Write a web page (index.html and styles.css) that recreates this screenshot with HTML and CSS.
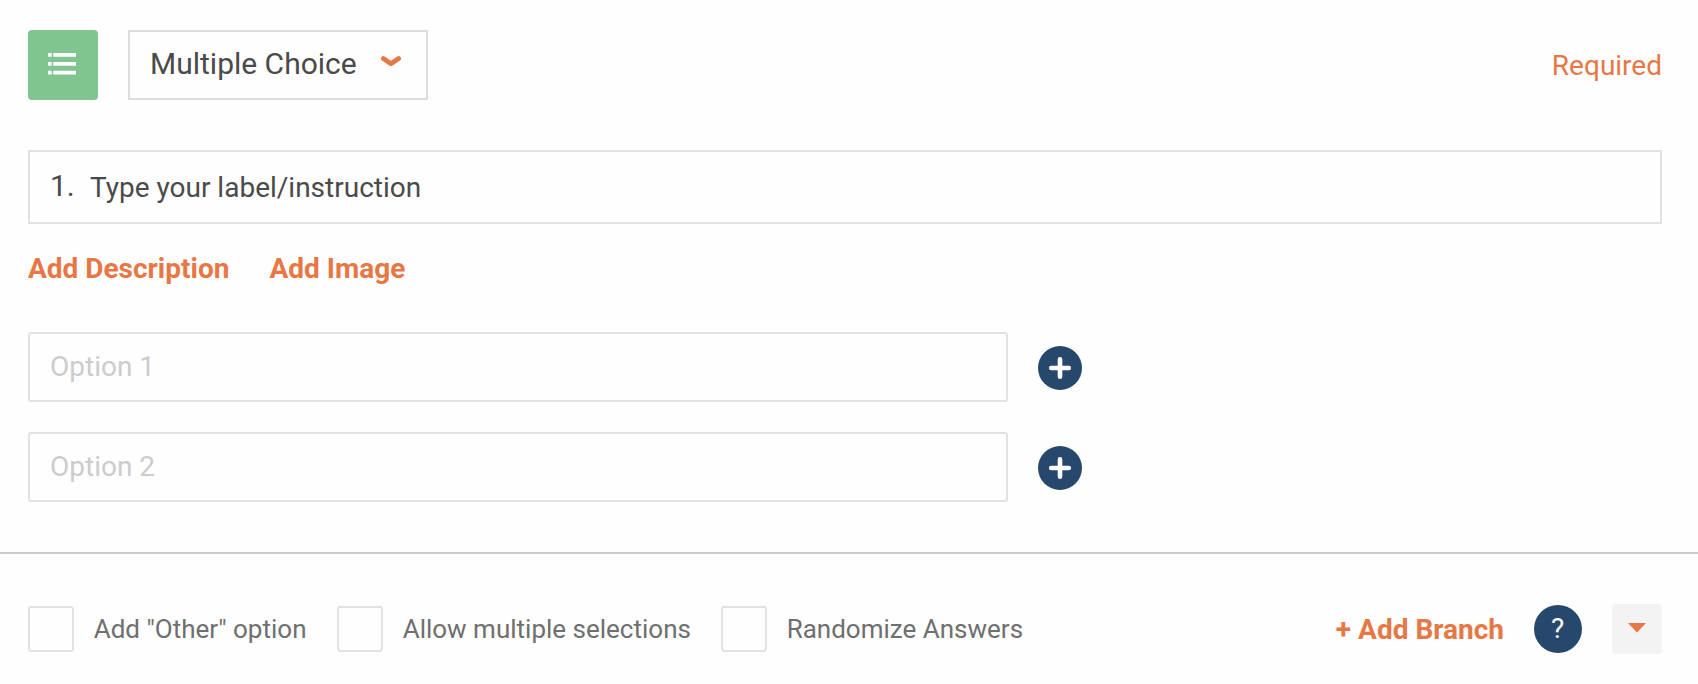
FILE: index.html
```html
<!DOCTYPE html>
<html lang="en">
<head>
<meta charset="utf-8">
<title>Question editor</title>
<link rel="stylesheet" href="styles.css">
</head>
<body>
<main class="editor">
  <section class="question">
    <header class="question-header">
      <div class="type-icon">
        <svg width="28" height="22" viewBox="0 0 28 22" fill="#fff"><path d="M0 0h3.700v3.800H0zM5.200 0H28v3.800H5.200zM0 8.900h3.700v3.800H0zM5.200 8.900H28v3.800H5.200zM0 17.700h3.700v3.800H0zM5.200 17.700H28v3.800H5.200z"/></svg>
      </div>
      <button class="type-select">
        <span class="type-name">Multiple Choice</span>
        <svg class="chevron" width="20" height="12" viewBox="0 0 20 12"><path d="M2.400 2.500L10 7.800L17.600 2.500" fill="none" stroke="#e77845" stroke-width="4.700" stroke-linecap="round" stroke-linejoin="round"/></svg>
      </button>
      <span class="required">Required</span>
    </header>
    <div class="label-box"><span class="number">1.</span><span class="label-text">Type your label/instruction</span></div>
    <nav class="links"><a class="link add-description">Add Description</a><a class="link add-image">Add Image</a></nav>
    <div class="options">
      <div class="option-row">
        <div class="option-input">Option 1</div>
        <svg class="plus" width="44" height="44" viewBox="0 0 44 44"><circle cx="22" cy="22" r="22" fill="#26486c"/><path d="M22 13.200v17.600M13.200 22h17.600" stroke="#fff" stroke-width="4.600" stroke-linecap="round"/></svg>
      </div>
      <div class="option-row">
        <div class="option-input">Option 2</div>
        <svg class="plus" width="44" height="44" viewBox="0 0 44 44"><circle cx="22" cy="22" r="22" fill="#26486c"/><path d="M22 13.200v17.600M13.200 22h17.600" stroke="#fff" stroke-width="4.600" stroke-linecap="round"/></svg>
      </div>
    </div>
  </section>
  <footer class="settings">
    <div class="check other"><span class="box"></span><span class="check-text">Add "Other" option</span></div>
    <div class="check multiple"><span class="box"></span><span class="check-text">Allow multiple selections</span></div>
    <div class="check"><span class="box"></span><span class="check-text">Randomize Answers</span></div>
    <a class="link branch">+ Add Branch</a>
    <span class="help">?</span>
    <button class="menu"><svg width="18" height="10" viewBox="0 0 18 10"><path d="M0 0h18L9 9.500z" fill="#e77845"/></svg></button>
  </footer>
</main>
</body>
</html>
```
FILE: styles.css
```css
* { box-sizing: border-box; }
body {
  margin: 0;
  background: #fefefe;
  color: #4a4a4a;
  font: 28px/34px Roboto, sans-serif;
}
button { font: inherit; color: inherit; padding: 0; border: 0; }
.editor { height: 684px; overflow: hidden; }
.question {
  height: 554px;
  padding: 30px 36px 0 28px;
  border-bottom: 2px solid #ccc;
}
.question-header { display: flex; align-items: center; height: 70px; }
.type-icon {
  display: flex;
  justify-content: center;
  width: 70px;
  height: 70px;
  padding-top: 23px;
  padding-right: 2px;
  border-radius: 4px;
  background: #80c48f;
}
.type-select {
  display: flex;
  align-items: flex-start;
  width: 300px;
  height: 70px;
  margin-left: 30px;
  padding: 15px 0 0 20px;
  border: 2px solid #ddd;
  background: #fefefe;
  font-size: 30px;
}
.type-name { width: 206px; text-align: left; white-space: nowrap; }
.chevron { margin: 9px 0 0 25px; }
.required { margin: 1px 0 0 auto; color: #e77845; }
.label-box {
  display: flex;
  height: 74px;
  margin-top: 50px;
  padding: 18px 20px;
  border: 2px solid #e2e2e2;
}
.number { width: 40px; margin-top: -1px; font-size: 30px; }
.label-text { margin-top: 1px; }
.links { display: flex; margin-top: 28px; }
.link { color: #e77845; font-weight: 700; white-space: nowrap; }
.add-description { width: 241.500px; }
.options { display: grid; gap: 30px; margin-top: 46px; }
.option-row { display: flex; align-items: center; gap: 30px; }
.option-input {
  width: 980px;
  height: 70px;
  padding: 16px 20px;
  border: 2px solid #e2e2e2;
  border-radius: 3px;
  color: #ccc;
}
.plus { margin-top: 1px; }
.settings { display: flex; align-items: center; height: 150px; padding: 0 36px 0 28px; }
.check { display: flex; align-items: center; color: #6f6f6f; font-size: 26px; white-space: nowrap; }
.other { width: 309px; }
.multiple { width: 384px; }
.box { width: 46px; height: 46px; margin-right: 19.700px; border: 2px solid #e2e2e2; border-radius: 3px; }
.branch { margin: 2px 0 0 auto; }
.help {
  width: 48px;
  height: 48px;
  margin: 0 30px;
  padding-right: 1px;
  border-radius: 50%;
  background: #26486c;
  color: #fff;
  text-align: center;
  line-height: 48px;
}
.menu {
  display: flex;
  justify-content: center;
  width: 50px;
  height: 50px;
  padding-top: 19px;
  border-radius: 4px;
  background: #f3f3f3;
}
```
